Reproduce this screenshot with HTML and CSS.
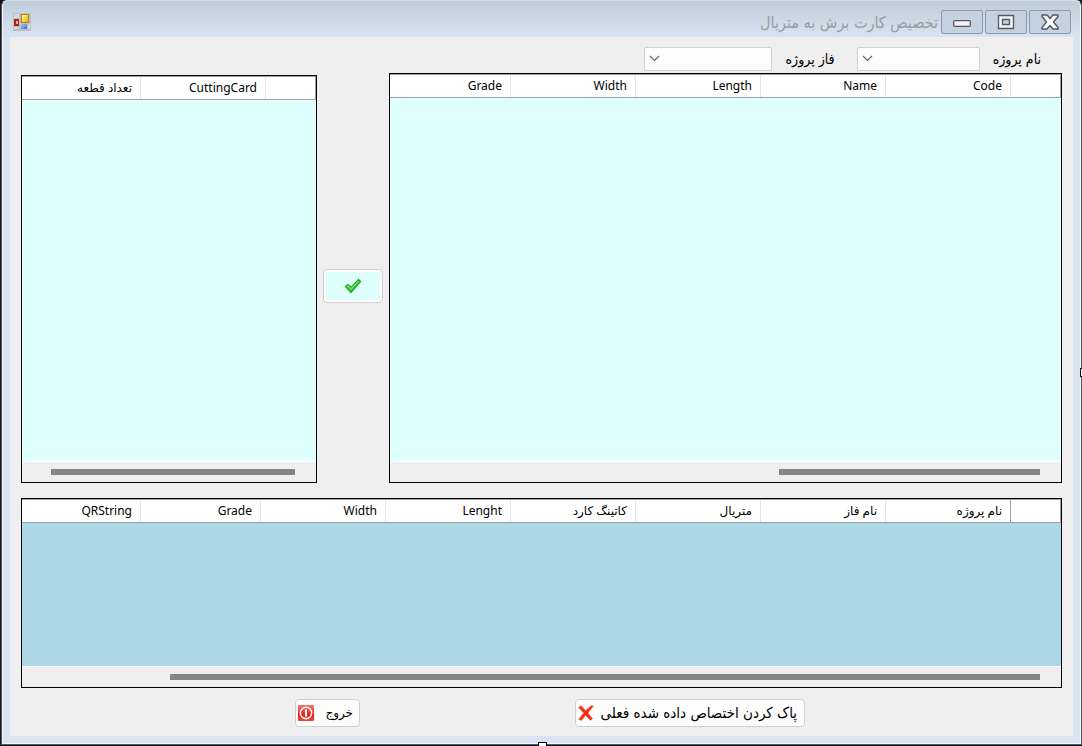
FILE: index.html
```html
<!DOCTYPE html>
<html lang="fa" dir="rtl">
<head>
<meta charset="utf-8">
<meta name="viewport" content="width=device-width, initial-scale=1">
<title>تخصیص کارت برش به متریال</title>
<link rel="stylesheet" href="styles.css">
</head>
<body>
<div class="window">
  <header class="titlebar">
    <div class="window-buttons">
      <button class="window-button" type="button" aria-label="بستن">
        <svg width="20" height="18" viewBox="0 0 20 18"><path d="M2 2h5l3 3.500 3-3.500h5v1.500L13.500 9l4.500 5.500V16h-5l-3-3.500L7 16H2v-1.500L6.500 9 2 3.500z" fill="#fafafa" stroke="#535666" stroke-width="1.400" stroke-linejoin="round"/></svg>
      </button>
      <button class="window-button" type="button" aria-label="بزرگ‌نمایی">
        <svg width="18" height="16" viewBox="0 0 18 16"><path d="M1.500 1.500h15v13h-15zM5.500 5.500v5h7v-5z" fill="#f4f4f4" fill-rule="evenodd" stroke="#535666" stroke-width="1.300"/></svg>
      </button>
      <button class="window-button" type="button" aria-label="کوچک‌نمایی">
        <svg width="18" height="16" viewBox="0 0 18 16"><rect x=".7" y="6.700" width="16.600" height="5.600" rx="1" fill="#f4f4f4" stroke="#535666" stroke-width="1.300"/></svg>
      </button>
    </div>
    <h1 class="title">تخصیص کارت برش به متریال</h1>
    <svg class="app-icon" width="18" height="18" viewBox="0 0 18 18">
      <defs>
        <linearGradient id="gold" x2="1" y2="1"><stop stop-color="#fff3a0"/><stop offset="1" stop-color="#f0b010"/></linearGradient>
        <linearGradient id="sky" x2="1" y2="1"><stop stop-color="#9cc8ff"/><stop offset="1" stop-color="#2f6fd0"/></linearGradient>
      </defs>
      <path d="M0 0h18v18H0z" fill="#bfbfbf"/>
      <path d="M1 1h5v4H1zM1 14h3v2H1zM5 14h1v2H5zM15 11h2v5h-2z" fill="#cfdae4"/>
      <path d="M1 6h5v7H1z" fill="#b3200f"/><path d="M3 8h2v3H3z" fill="#f0a89c"/>
      <path d="M8 1h8v9H8z" fill="#b98500"/><path d="M9 2h6v7H9z" fill="url(#gold)"/>
      <path d="M8 11h6v5H8z" fill="url(#sky)"/>
    </svg>
  </header>

  <main class="client">
    <div class="filters">
      <label for="project">نام پروژه</label>
      <div class="combo combo-project">
        <select id="project"><option></option></select>
        <svg class="chevron" width="11" height="7" viewBox="0 0 11 7"><path d="M1 1l4.500 4.500L10 1" fill="none" stroke="#666" stroke-width="1.200"/></svg>
      </div>
      <label for="phase">فاز پروژه</label>
      <div class="combo combo-phase">
        <select id="phase"><option></option></select>
        <svg class="chevron" width="11" height="7" viewBox="0 0 11 7"><path d="M1 1l4.500 4.500L10 1" fill="none" stroke="#666" stroke-width="1.200"/></svg>
      </div>
    </div>

    <div class="workspace">
      <section class="grid grid-materials">
        <table>
          <colgroup><col class="col-row"><col class="col"><col class="col"><col class="col"><col class="col"><col></colgroup>
          <thead><tr><td></td><th>Code</th><th>Name</th><th>Length</th><th>Width</th><th>Grade</th></tr></thead>
        </table>
        <div class="rows"></div>
        <div class="scrollbar"><div class="thumb thumb-materials"></div></div>
      </section>
      <div class="assign">
        <button class="assign-button" type="button" aria-label="تخصیص">
          <svg width="18" height="16" viewBox="0 0 18 16"><path d="M1.500 8.500l2.500-2 3 3L14.500 1.500 16.500 3.500 7 14.500z" fill="#3fd03a" stroke="#2aa52a" stroke-width="1.200" stroke-linejoin="round"/><path d="M3 8.500l1-.7 3 3L14.500 3" fill="none" stroke="#8cf07e"/></svg>
        </button>
      </div>
      <section class="grid grid-cards">
        <table>
          <colgroup><col class="col-row"><col class="col"><col></colgroup>
          <thead><tr><td></td><th>CuttingCard</th><th>تعداد قطعه</th></tr></thead>
        </table>
        <div class="rows"></div>
        <div class="scrollbar"><div class="thumb thumb-cards"></div></div>
      </section>
    </div>

    <section class="grid grid-assigned">
      <table>
        <colgroup><col class="col-row"><col class="col"><col class="col"><col class="col"><col class="col"><col class="col"><col class="col"><col class="col-short"><col></colgroup>
        <thead><tr><td></td><th>نام پروژه</th><th>نام فاز</th><th>متریال</th><th>کاتینگ کارد</th><th>Lenght</th><th>Width</th><th>Grade</th><th>QRString</th></tr></thead>
      </table>
      <div class="rows"></div>
      <div class="scrollbar"><div class="thumb thumb-assigned"></div></div>
    </section>

    <footer class="actions">
      <button class="action action-clear" type="button">
        <span>پاک کردن اختصاص داده شده فعلی</span>
        <svg width="16" height="16" viewBox="0 0 16 16"><path d="M.5 2.500L3 .5l4.500 5L13.500.5l2 .5L10 8l4.500 5.500-2 2L7.500 10.500l-4 5-3-1L5.500 8z" fill="#f0301c" stroke="#f58070" stroke-width=".6"/></svg>
      </button>
      <button class="action action-exit" type="button">
        <span>خروج</span>
        <svg width="16" height="16" viewBox="0 0 16 16"><defs><linearGradient id="red" x2="0" y2="1"><stop stop-color="#f47c6c"/><stop offset=".6" stop-color="#e8201a"/><stop offset="1" stop-color="#f04038"/></linearGradient></defs><rect width="16" height="16" rx="1" fill="url(#red)"/><circle cx="8" cy="8" r="5.700" fill="none" stroke="#fff" stroke-width="1.500"/><path d="M8 4.500v7" stroke="#fff" stroke-width="2"/></svg>
      </button>
    </footer>
  </main>
  <span class="handle handle-side"></span>
  <span class="handle handle-bottom"></span>
</div>
</body>
</html>
```
FILE: styles.css
```css
* { box-sizing: border-box; }

body {
  margin: 0;
  padding: 0 0 1px 1px;
  min-height: 100vh;
  display: flex;
  background: #17171b;
  color: #000;
  font: 12px/16px "Noto Sans", "DejaVu Sans", sans-serif;
}

button, select { font: inherit; color: inherit; margin: 0; padding: 0; }
svg { display: block; flex: none; }

.window {
  position: relative;
  flex: 1;
  display: flex;
  flex-direction: column;
  padding: 0 8px 8px;
  border: 1px solid #555a60;
  border-top-color: #d5dde5;
  border-radius: 6px 6px 0 0;
  background: linear-gradient(#bfccd9, #d8e4f1 36px) no-repeat #d8e4f1;
  box-shadow: inset 1px 0 #edf3f9, inset -1px 0 #edf3f9, inset 0 -1px #edf3f9;
}

.titlebar {
  height: 36px;
  padding: 0 2px 0 3px;
  display: flex;
  align-items: center;
  gap: 3px;
}
.window-buttons { display: flex; gap: 2px; padding-top: 6px; }
.window-button {
  width: 42px;
  height: 24px;
  display: flex;
  align-items: center;
  justify-content: center;
  border: 1px solid #8b99b2;
  border-radius: 2px;
  background: #c4d1df;
}
.title {
  margin: 0;
  padding-top: 8px;
  color: #979da3;
  font-family: "DejaVu Sans Condensed", "DejaVu Sans", sans-serif;
  font-size: 16px;
  line-height: 20px;
  font-weight: normal;
}
.app-icon { margin-right: auto; margin-top: 6px; }

.client {
  flex: 1;
  display: flex;
  flex-direction: column;
  padding: 0 11px;
  background: #efefef;
}

.filters {
  height: 36px;
  padding: 8px 21px 0 0;
  display: flex;
  align-items: center;
  gap: 13px;
  font-family: "DejaVu Sans Condensed", "DejaVu Sans", sans-serif;
  font-size: 14px;
}
.combo { position: relative; height: 24px; }
.combo-project { width: 123px; margin-left: 9px; }
.combo-phase { width: 128px; }
.combo select {
  display: block;
  width: 100%;
  height: 100%;
  appearance: none;
  border: 1px solid #d0d0d0;
  border-radius: 2px;
  background: #fdfdfd;
}
.chevron { position: absolute; left: 5px; top: 8px; pointer-events: none; }

.workspace { flex: 410 1 0; display: flex; }
.grid {
  display: flex;
  flex-direction: column;
  border: 1px solid #000;
  background: #dfffff;
}
.grid-materials { flex: 671 1 0; }
.grid-cards { flex: 294 1 0; margin-top: 2px; }
.grid-assigned { flex: 188 1 0; margin-top: 15px; background: #add8e6; }

table {
  width: 100%;
  table-layout: fixed;
  border-collapse: separate;
  border-spacing: 0;
  background: #fff;
  border: 1px solid #a0a0a0;
  border-left: 0;
}
.col-row { width: 50px; }
.col { width: 125px; }
.col-short { width: 120px; }
th, td {
  height: 22px;
  padding: 0 8px;
  border-left: 1px solid #e5e5e5;
  text-align: right;
  font-weight: normal;
  white-space: nowrap;
}
th:last-child { border-left: 0; }
.grid-assigned td { border-left-color: #a0a0a0; }

.rows { flex: 1; }
.scrollbar {
  height: 21px;
  padding: 7px 21px 0 29px;
  border-top: 1px solid #fff;
  background: #efefef;
}
.thumb { height: 6px; background: #858585; }
.thumb-materials { width: 42%; }
.thumb-assigned { width: 88%; }

.assign {
  flex: 72 1 0;
  display: flex;
  align-items: center;
  justify-content: center;
  padding-top: 16px;
}
.assign-button {
  width: 60px;
  height: 34px;
  display: flex;
  align-items: center;
  justify-content: center;
  border: 1px solid #d0d0d0;
  border-radius: 4px;
  background: #dfffff;
  box-shadow: inset 0 0 0 2px #fdfdfd;
}

.actions {
  height: 48px;
  padding: 11px 257px 0 0;
  display: flex;
  align-items: flex-start;
  gap: 215px;
}
.action {
  height: 28px;
  display: flex;
  align-items: center;
  justify-content: space-between;
  border: 1px solid #d0d0d0;
  border-radius: 4px;
  background: #fdfdfd;
}
.action-clear {
  width: 230px;
  padding: 0 7px 0 2px;
  font-family: "DejaVu Sans Condensed", "DejaVu Sans", sans-serif;
  font-size: 15px;
}
.action-exit { width: 65px; padding: 0 6px 0 2px; }

.handle { position: absolute; border: 1px solid #000; background: #fff; }
.handle-side { right: -1px; top: 367px; width: 2px; height: 9px; border-right: 0; }
.handle-bottom { left: 536px; bottom: -2px; width: 9px; height: 4px; border-bottom: 0; }
```
